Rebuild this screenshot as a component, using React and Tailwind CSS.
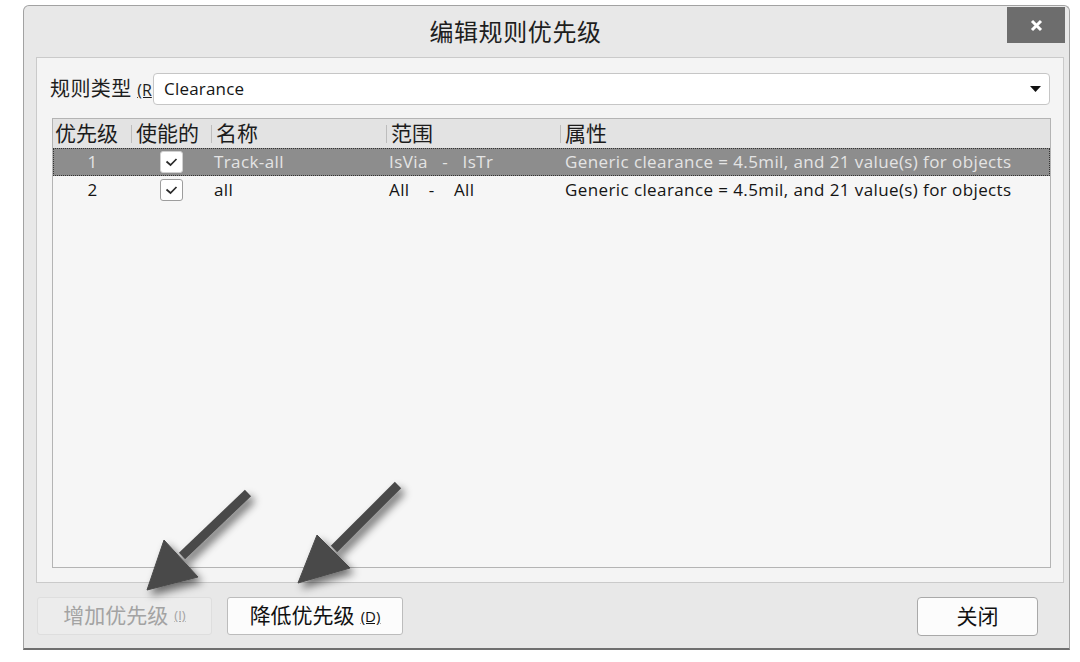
import React from "react";

const FONT = { fontFamily: "'Open Sans','Noto Sans CJK SC',sans-serif" };

function Check() {
  return (
    <svg width="13" height="10" viewBox="0 0 13 10">
      <path d="M1.5 4.5 L5.5 8 L11.5 2" fill="none" stroke="#2a2a2a" strokeWidth="1.7" />
    </svg>
  );
}

function Row({ sel, n, name, scope, attr }) {
  return (
    <div
      className={
        "h-[28px] flex items-center text-[17px] tracking-[0.4px] " +
        (sel
          ? "bg-[#8d8d8d] text-[#e4e4e4] border border-dotted border-[#333]"
          : "text-[#141414] border border-transparent")
      }
    >
      <div className="w-[77px] text-center">{n}</div>
      <div className="w-[80px] flex justify-center">
        <div
          className={
            "w-[23px] h-[22px] rounded-[3px] bg-white flex items-center justify-center border " +
            (sel ? "border-[#d0d0d0]" : "border-[#9d9d9d]")
          }
        >
          <Check />
        </div>
      </div>
      <div className="w-[175px] pl-[3px]">{name}</div>
      <div className="w-[174px] pl-[3px] whitespace-pre">{scope}</div>
      <div className="flex-1 pl-[5px] whitespace-nowrap">{attr}</div>
    </div>
  );
}

function Arrows() {
  return (
    <svg
      className="absolute left-0 top-0 pointer-events-none"
      width="1080"
      height="662"
      viewBox="0 0 1080 662"
    >
      <defs>
        <filter id="sh" x="-50%" y="-50%" width="200%" height="200%">
          <feGaussianBlur in="SourceAlpha" stdDeviation="4" />
          <feOffset dx="4" dy="5" result="b" />
          <feComponentTransfer>
            <feFuncA type="linear" slope="0.55" />
          </feComponentTransfer>
          <feMerge>
            <feMergeNode />
            <feMergeNode in="SourceGraphic" />
          </feMerge>
        </filter>
      </defs>
      <g filter="url(#sh)" fill="#4a4a4a" stroke="#4a4a4a">
        <line x1="248" y1="493" x2="182" y2="556" strokeWidth="9" />
        <polygon points="147,590 164,540 198,577" strokeWidth="1" />
        <line x1="398" y1="485" x2="334" y2="549" strokeWidth="9" />
        <polygon points="298,583 317,535 350,568" strokeWidth="1" />
      </g>
    </svg>
  );
}

export default function App() {
  return (
    <div className="w-[1080px] h-[662px] bg-white relative overflow-hidden" style={FONT}>
      <div className="pt-[5px] pl-[23px]">
        <div className="w-[1047px] h-[645px] bg-[#e8e8e8] border border-[#a2a2a2] border-b-2 border-b-[#6f6f6f] rounded-t-[6px] flex flex-col">
          {/* title bar */}
          <div className="h-[51px] flex items-start">
            <div className="flex-1 h-full flex items-center justify-center text-[24px] tracking-[0.6px] text-[#1e1e1e]">
              编辑规则优先级
            </div>
            <div className="mt-[1px] mr-[4px] w-[58px] h-[36px] bg-[#6d6d6d] flex items-center justify-center">
              <svg width="13" height="13" viewBox="0 0 13 13">
                <path d="M2 2 L11 11 M11 2 L2 11" stroke="#fff" strokeWidth="3" />
              </svg>
            </div>
          </div>

          {/* inner panel */}
          <div className="ml-[12px] mr-[5px] h-[526px] bg-[#f4f4f4] border border-[#cacaca] pt-[15px] pl-[15px] pr-[12px] flex flex-col">
            <div className="h-[32px] flex items-center">
              <div className="w-[104px] -ml-[2px] text-[20px] tracking-[0.4px] text-[#1e1e1e] whitespace-nowrap overflow-hidden">
                规则类型 <span className="text-[16px] tracking-normal underline">(R</span>
              </div>
              <div className="flex-1 h-[32px] bg-white border border-[#c6c6c6] rounded-[4px] flex items-center pl-[10px] pr-[8px] -ml-[1px] mr-[1px]">
                <span className="flex-1 text-[17px] tracking-[0.2px] text-[#151515]">Clearance</span>
                <svg width="11" height="7" viewBox="0 0 11 7">
                  <path d="M0 0 L11 0 L5.5 6 Z" fill="#111" />
                </svg>
              </div>
            </div>

            <div className="mt-[13px] h-[450px] bg-[#f6f6f6] border border-[#b4b4b4] flex flex-col">
              <div className="h-[29px] bg-[#e3e3e3] flex items-center text-[21px] text-[#1c1c1c]">
                <div className="w-[78px] pl-[2px]">优先级</div>
                <div className="w-[80px] flex items-center">
                  <span className="w-[1px] h-[18px] bg-[#bdbdbd] mr-[4px]" />
                  使能的
                </div>
                <div className="w-[175px] flex items-center">
                  <span className="w-[1px] h-[18px] bg-[#bdbdbd] mr-[4px]" />
                  名称
                </div>
                <div className="w-[174px] flex items-center">
                  <span className="w-[1px] h-[18px] bg-[#bdbdbd] mr-[4px]" />
                  范围
                </div>
                <div className="flex-1 flex items-center">
                  <span className="w-[1px] h-[18px] bg-[#bdbdbd] mr-[4px]" />
                  属性
                </div>
              </div>
              <Row
                sel
                n="1"
                name="Track-all"
                scope={"IsVia   -   IsTr"}
                attr="Generic clearance = 4.5mil, and 21 value(s) for objects"
              />
              <Row
                n="2"
                name="all"
                scope={"All    -    All"}
                attr="Generic clearance = 4.5mil, and 21 value(s) for objects"
              />
            </div>
          </div>

          {/* footer */}
          <div className="flex-1 flex items-start pt-[14px] pl-[13px] pr-[31px]">
            <div className="w-[175px] h-[38px] rounded-[3px] bg-[#ececec] border border-[#dedede] flex items-center justify-center text-[21px] text-[#a3a3a3]">
              增加优先级<span className="ml-[6px] text-[13px] underline">(I)</span>
            </div>
            <div className="ml-[15px] w-[176px] h-[38px] rounded-[3px] bg-[#fcfcfc] border border-[#bcbcbc] flex items-center justify-center text-[21px] text-[#111]">
              降低优先级<span className="ml-[6px] text-[15px] underline">(D)</span>
            </div>
            <div className="flex-1" />
            <div className="w-[121px] h-[39px] rounded-[4px] bg-[#fcfcfc] border border-[#a9a9a9] flex items-center justify-center text-[21px] text-[#111]">
              关闭
            </div>
          </div>
        </div>
      </div>
      <Arrows />
    </div>
  );
}
